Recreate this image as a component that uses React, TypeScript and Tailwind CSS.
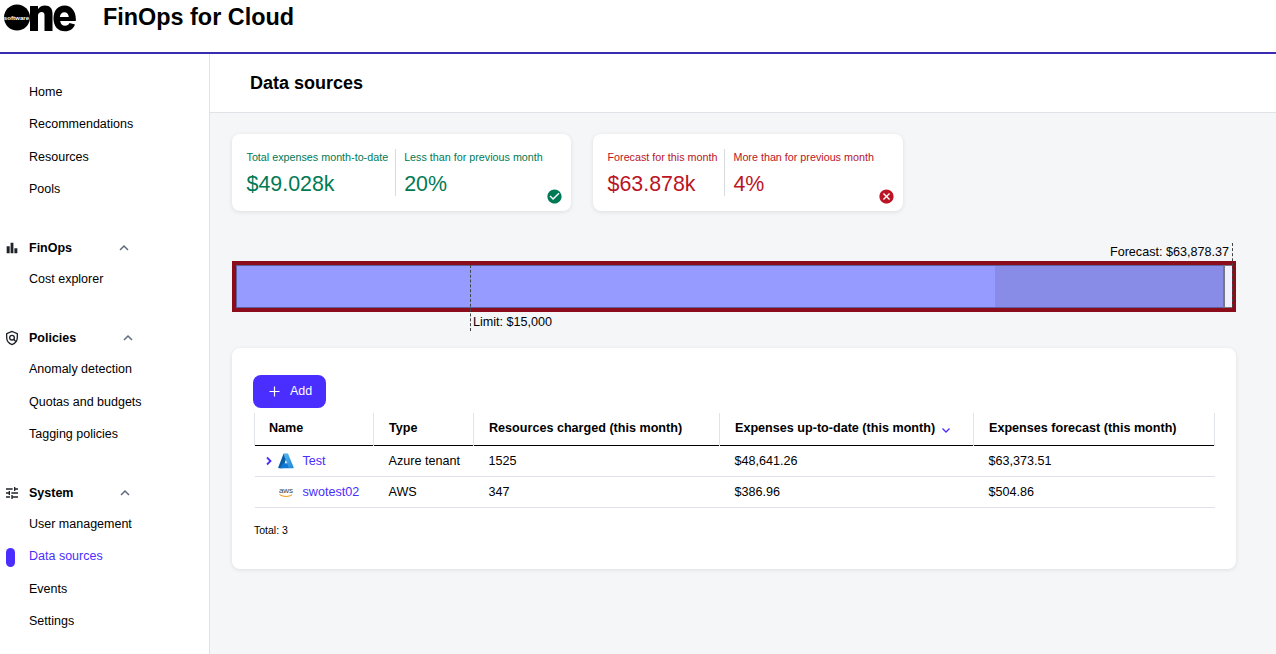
const navGroups = [
  { title: "", items: ["Home", "Recommendations", "Resources", "Pools"] },
  { title: "FinOps", icon: "bars", chevronLeft: 118, items: ["Cost explorer"] },
  { title: "Policies", icon: "shield", chevronLeft: 122, items: ["Anomaly detection", "Quotas and budgets", "Tagging policies"] },
  { title: "System", icon: "tune", chevronLeft: 119, items: ["User management", "Data sources", "Events", "Settings"] },
];

function Logo() {
  return (
    <svg width="76" height="32" viewBox="0 0 76 32" className="shrink-0">
      <circle cx="17" cy="16.5" r="13" fill="#000" />
      <text x="16.500" y="18.500" textAnchor="middle" fontSize="6.200" fontWeight="700" fill="#fff" fontFamily="Liberation Sans">
        software
      </text>
      <path d="M30 30V5h8v3c2-2.500 4-3.500 7-3.500 5 0 7.500 3 7.500 8V30h-8V14c0-2-1-3-2.800-3-2 0-3.700 1.300-3.700 3.500V30z" fill="#000" />
      <path d="M64.500 4.500c-6.500 0-11 5-11 13s4.500 12.800 11.500 12.800c5 0 8.500-2.500 10-6.800l-5.500-1.500c-.8 1.800-2.300 2.800-4.400 2.800-2.800 0-4.600-1.800-4.900-4.800H75.800c.6-9-3.800-15.500-11.300-15.500zm-4.700 11.500c.4-2.800 2.200-4.700 4.600-4.700s4.200 1.900 4.400 4.700z" fill="#000" />
    </svg>
  );
}

function GroupIcon({ name }: { name: string }) {
  if (name === "bars") {
    return (
      <svg width="16" height="16" viewBox="0 0 24 24" fill="#1f2328">
        <path d="M4 9.200h4.500V20H4zM9.900 4h4.200v16H9.900zM15.600 12.500H20V20h-4.400z" />
      </svg>
    );
  }
  if (name === "shield") {
    return (
      <svg width="16" height="16" viewBox="0 0 24 24" fill="none" stroke="#1f2328" strokeWidth="2">
        <path d="M12 2.100 4 5.600V11c0 4.800 3.300 9.300 8 10.900 4.700-1.600 8-6.100 8-10.900V5.600z" />
        <circle cx="12" cy="11.500" r="3.500" />
        <path d="m14.500 14 3.500 3.500" />
      </svg>
    );
  }
  return (
    <svg width="16" height="16" viewBox="0 0 24 24" fill="#1f2328">
      <path d="M3 17v2h6v-2H3zM3 5v2h10V5H3zm10 16v-2h8v-2h-8v-2h-2v6h2zM7 9v2H3v2h4v2h2V9H7zm14 4v-2H11v2h10zm-6-4h2V7h4V5h-4V3h-2v6z" />
    </svg>
  );
}

function Sidebar() {
  return (
    <aside className="w-[210px] shrink-0 border-r border-[#dfe3e8] bg-white pt-[22.250px]">
      {navGroups.map((group) => (
        <div key={group.items[0]} className="mb-[27.750px]">
          {group.title && (
            <div className="relative flex h-[30px] items-center pl-[29px] text-[12.500px] font-bold text-black">
              <span className="absolute left-[4px] top-[7px]">
                <GroupIcon name={group.icon as string} />
              </span>
              {group.title}
              <svg
                width="12"
                height="12"
                viewBox="0 0 12 12"
                fill="none"
                stroke="#5f6b7c"
                strokeWidth="1.500"
                className="absolute top-[9px]"
                style={{ left: group.chevronLeft }}
              >
                <path d="m2 8 4-4 4 4" />
              </svg>
            </div>
          )}
          {group.items.map((item) => {
            const active = item === "Data sources";
            return (
              <div
                key={item}
                className={`relative flex h-[32.350px] items-center pl-[29px] text-[12.500px] ${active ? "text-[#4a2dff]" : "text-black"}`}
              >
                {active && <span className="absolute left-[6px] top-[7px] h-[19px] w-[9px] rounded-full bg-[#4a2dff]" />}
                {item}
              </div>
            );
          })}
        </div>
      ))}
    </aside>
  );
}

function SummaryCard({
  tone,
  label,
  value,
  compareLabel,
  compareValue,
  width,
}: {
  tone: "good" | "bad";
  label: string;
  value: string;
  compareLabel: string;
  compareValue: string;
  width: string;
}) {
  const color = tone === "good" ? "text-[#007a55]" : "text-[#bb1425]";
  return (
    <div className={`relative flex h-[77px] rounded-lg bg-white py-[15px] pl-[14.500px] shadow-[0_1px_4px_rgba(0,0,0,0.1)] ${width} ${color}`}>
      <div className="border-r border-[#d9dcdf] pr-[7px]">
        <div className="text-[10.750px] leading-[16px]">{label}</div>
        <div className="mt-[6px] text-[21.400px] leading-[26px]">{value}</div>
      </div>
      <div className="pl-[8px]">
        <div className="text-[10.750px] leading-[16px]">{compareLabel}</div>
        <div className="mt-[6px] text-[21.400px] leading-[26px]">{compareValue}</div>
      </div>
      <svg width="17" height="17" viewBox="0 0 24 24" fill="currentColor" className="absolute bottom-[6.500px] right-[8.500px]">
        {tone === "good" ? (
          <path d="M12 2C6.480 2 2 6.480 2 12s4.480 10 10 10 10-4.480 10-10S17.520 2 12 2zm-2 15-5-5 1.410-1.410L10 14.170l7.590-7.590L19 8l-9 9z" />
        ) : (
          <path d="M12 2C6.470 2 2 6.470 2 12s4.470 10 10 10 10-4.470 10-10S17.530 2 12 2zm5 13.590L15.590 17 12 13.410 8.410 17 7 15.590 10.590 12 7 8.410 8.410 7 12 10.590 15.590 7 17 8.410 13.410 12 17 15.590z" />
        )}
      </svg>
    </div>
  );
}

function ExpensesBar() {
  return (
    <div className="relative mt-[32px] pt-[18px]">
      <div className="flex h-[51px] border-[4px] border-[#8b0d1c]">
        <div className="w-[759px] border-y border-l border-[#5d5f9e] bg-[#969bff]" />
        <div className="w-[228px] border-y border-[#5d5f9e] bg-[#888ce6]" />
        <div className="w-[9px] border-y border-l-2 border-[#77787f] bg-[#eef0ff]" />
      </div>
      <div className="absolute left-[238px] top-[22px] h-[66px] border-l border-dashed border-[#444]" />
      <div className="absolute left-[241px] top-[71px] text-[12.600px] leading-[16px] text-black">Limit: $15,000</div>
      <div className="absolute left-[1000px] top-0 h-[64px] border-l border-dashed border-[#444]" />
      <div className="absolute right-[7px] top-[1px] text-[12.600px] leading-[16px] text-black">Forecast: $63,878.37</div>
    </div>
  );
}

function AzureIcon() {
  return (
    <svg width="16" height="16" viewBox="0 0 16 16">
      <defs>
        <linearGradient id="az" x1="0" y1="0" x2="1" y2="1">
          <stop offset="0" stopColor="#5ab8f0" />
          <stop offset="1" stopColor="#1f86d6" />
        </linearGradient>
      </defs>
      <path d="M5.500.8h4.300L5.300 14.600a.8.800 0 0 1-.8.600H1a.7.700 0 0 1-.7-1z" fill="#0a5ea8" />
      <path d="M11.800 10.200H5l-2.900 5h9.200z" fill="#0f78d4" />
      <path d="M5.500.8h4.600l5.500 13.400a.7.700 0 0 1-.7 1h-4L5.500.8z" fill="url(#az)" />
    </svg>
  );
}

function AwsIcon() {
  return (
    <svg width="16" height="16" viewBox="0 0 16 16">
      <text x="8" y="8.500" textAnchor="middle" fontSize="8" fill="#444" fontFamily="Liberation Sans">
        aws
      </text>
      <path d="M1.500 10.500c3.800 2.500 9 2.500 12.500.3" fill="none" stroke="#f29100" strokeWidth="1" />
    </svg>
  );
}

const rows = [
  { name: "Test", type: "Azure tenant", resources: "1525", spent: "$48,641.26", forecast: "$63,373.51", expandable: true },
  { name: "swotest02", type: "AWS", resources: "347", spent: "$386.96", forecast: "$504.86", expandable: false },
];

const headerCell = "border-r border-[#e0e3e7] px-[15px] text-left font-bold";
const bodyCell = "px-[15px] pb-0 pt-[2px]";

function DataSourcesCard() {
  return (
    <div className="mt-[36px] h-[221px] rounded-lg bg-white pl-[21px] pr-[21px] pt-[27px] shadow-[0_1px_4px_rgba(0,0,0,0.1)]">
      <button className="flex h-[33px] w-[73px] items-center rounded-lg bg-[#4a2dff] pl-[16px] text-[12.500px] text-white">
        <svg width="11" height="11" viewBox="0 0 11 11" stroke="#fff" strokeWidth="1.200" className="mr-[10px]">
          <path d="M5.500.5v10M.5 5.500h10" />
        </svg>
        Add
      </button>
      <table className="ml-[1px] mt-[5px] w-[960px] table-fixed border-collapse whitespace-nowrap text-[12.600px] text-black">
        <colgroup>
          <col className="w-[119px]" />
          <col className="w-[100px]" />
          <col className="w-[246px]" />
          <col className="w-[254px]" />
          <col className="w-[241px]" />
        </colgroup>
        <thead>
          <tr className="h-[32px] border-b border-black">
            <th className={`${headerCell} border-l !pl-[14px]`}>Name</th>
            <th className={headerCell}>Type</th>
            <th className={headerCell}>Resources charged (this month)</th>
            <th className={headerCell}>
              <span className="flex items-center">
                Expenses up-to-date (this month)
                <svg width="10" height="10" viewBox="0 0 10 10" fill="none" stroke="#4a2dff" strokeWidth="1.300" className="ml-[6px] mt-[2px]">
                  <path d="m1.500 3.500 3.500 3.500 3.500-3.500" />
                </svg>
              </span>
            </th>
            <th className={headerCell}>Expenses forecast (this month)</th>
          </tr>
        </thead>
        <tbody>
          {rows.map((row) => (
            <tr key={row.name} className="h-[31px] border-b border-[#e0e3e7]">
              <td className="px-0 pb-0 pt-[2px]">
                <span className="flex items-center">
                  <span className="flex w-[23px] justify-end pr-[4px]">
                    {row.expandable && (
                      <svg width="10" height="10" viewBox="0 0 10 10" fill="none" stroke="#4a2dff" strokeWidth="1.800">
                        <path d="m3 1.500 3.500 3.500L3 8.500" />
                      </svg>
                    )}
                  </span>
                  {row.expandable ? <AzureIcon /> : <AwsIcon />}
                  <span className="ml-[9px] text-[#4a2dff]">{row.name}</span>
                </span>
              </td>
              <td className={bodyCell}>{row.type}</td>
              <td className={bodyCell}>{row.resources}</td>
              <td className={bodyCell}>{row.spent}</td>
              <td className={bodyCell}>{row.forecast}</td>
            </tr>
          ))}
        </tbody>
      </table>
      <div className="ml-[1px] mt-[14px] text-[10.500px] leading-[16px] text-black">Total: 3</div>
    </div>
  );
}

export default function App() {
  return (
    <div className="flex h-[654px] flex-col overflow-hidden bg-white font-['Liberation_Sans',Arial,sans-serif]">
      <header className="flex h-[54px] shrink-0 border-b-2 border-[#3a2bb5] pt-[1px]">
        <Logo />
        <h1 className="ml-[27px] text-[23.400px] font-bold leading-[32px] text-black">FinOps for Cloud</h1>
      </header>
      <div className="flex min-h-0 flex-1">
        <Sidebar />
        <main className="min-w-0 flex-1 bg-[#f5f6f8]">
          <div className="flex h-[59px] items-center border-b border-[#e0e3e7] bg-white pl-[40px]">
            <h2 className="text-[18px] font-bold text-black">Data sources</h2>
          </div>
          <div className="pl-[22px] pr-[40px] pt-[21px]">
            <div className="flex gap-[22px]">
              <SummaryCard
                tone="good"
                width="w-[339px]"
                label="Total expenses month-to-date"
                value="$49.028k"
                compareLabel="Less than for previous month"
                compareValue="20%"
              />
              <SummaryCard
                tone="bad"
                width="w-[310px]"
                label="Forecast for this month"
                value="$63.878k"
                compareLabel="More than for previous month"
                compareValue="4%"
              />
            </div>
            <ExpensesBar />
            <DataSourcesCard />
          </div>
        </main>
      </div>
    </div>
  );
}
